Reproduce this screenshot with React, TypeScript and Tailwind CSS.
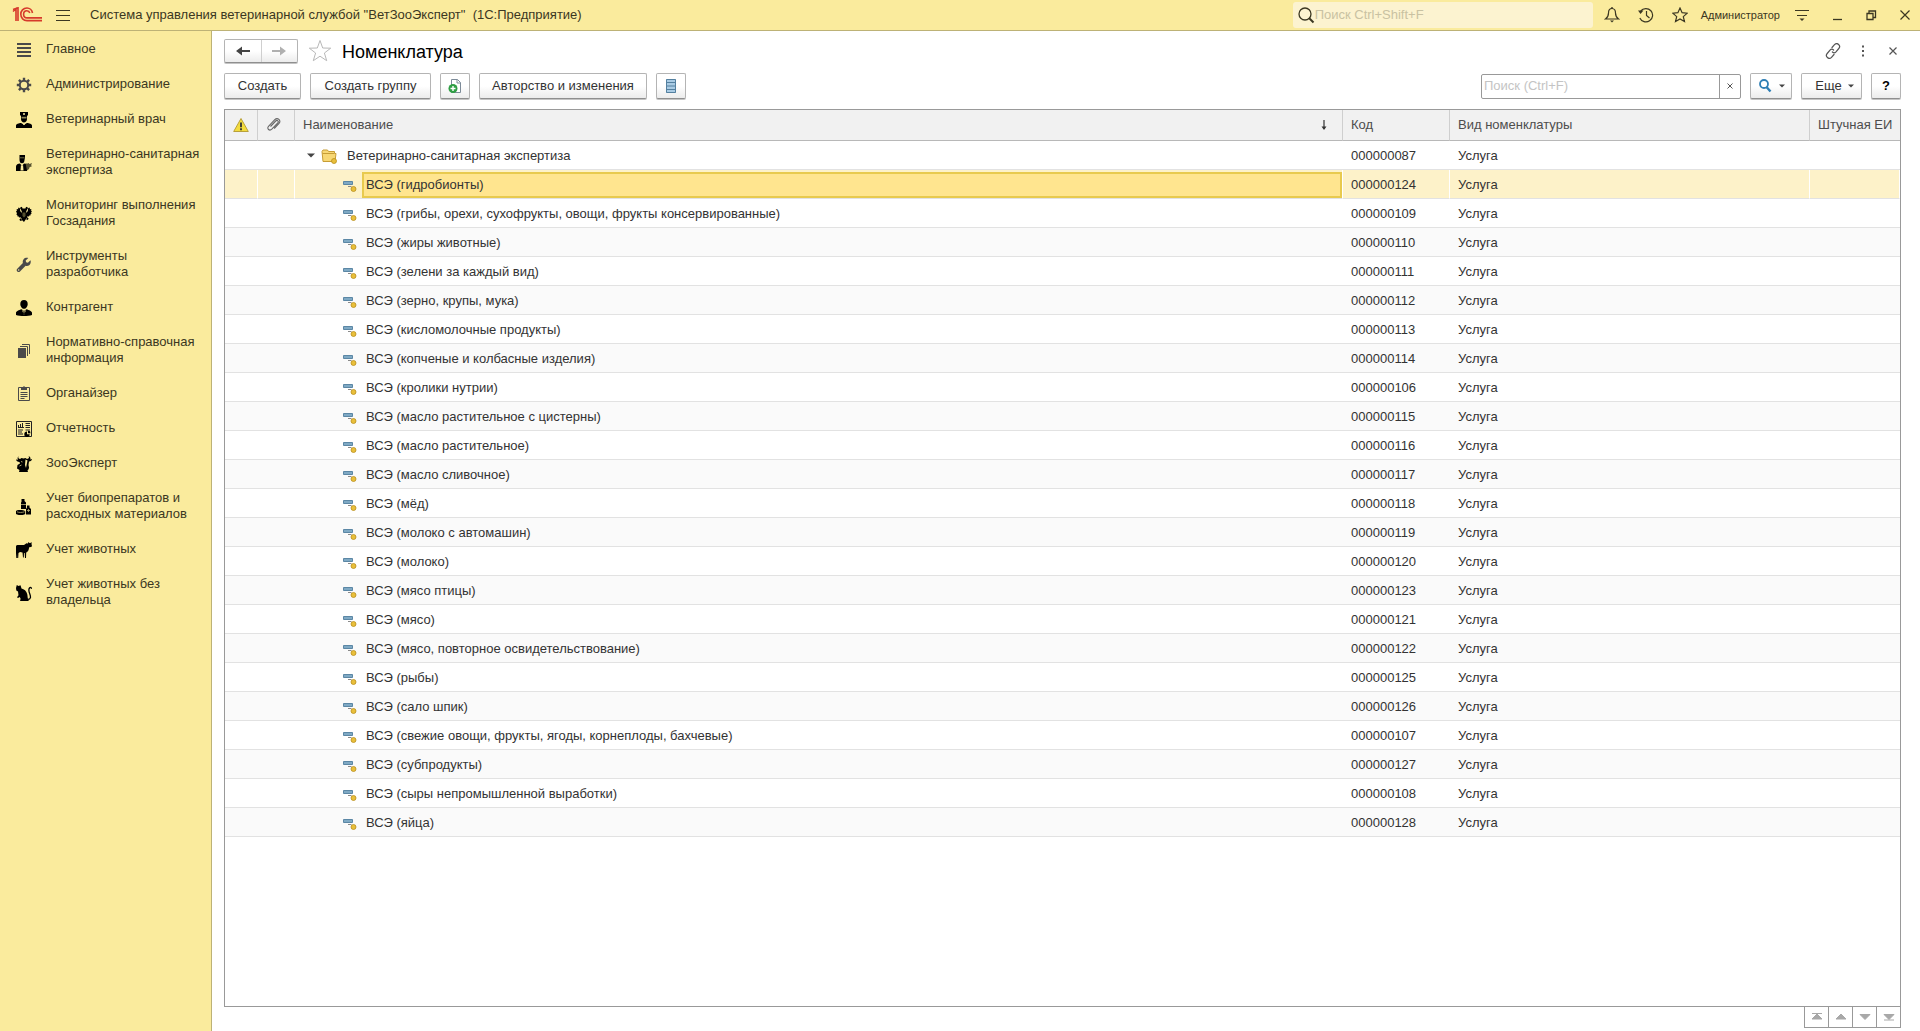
import type { ReactNode } from "react";

const ink = "#4a4a4a";

function Icon({ size = 16, children }: { size?: number; children: ReactNode }) {
  return (
    <svg width={size} height={size} viewBox={`0 0 ${size} ${size}`} className="shrink-0" aria-hidden="true">
      {children}
    </svg>
  );
}

const icons = {
  main: (
    <Icon>
      <path d="M1 2h14M1 6h14M1 10h14M1 14h14" stroke={ink} strokeWidth="2" />
    </Icon>
  ),
  gear: (
    <Icon>
      <circle cx="8" cy="8" r="4.200" fill="none" stroke={ink} strokeWidth="2" />
      <path
        d="M8 .8v3M8 12.200v3M.8 8h3M12.200 8h3M2.900 2.900l2.200 2.200M10.900 10.900l2.200 2.200M2.900 13.100l2.200-2.200M10.900 5.100l2.200-2.200"
        stroke={ink}
        strokeWidth="2.400"
      />
    </Icon>
  ),
  doctor: (
    <Icon>
      <path d="M4 0h8v3l-1 1v3c0 2-1.500 3.500-3 3.500S5 9 5 7V4L4 3z" />
      <path d="M5.500 4.800h5v1.700h-5z" fill="#8d8658" />
      <path d="M7.500 1h1v2h-1zM7 1.500h2v1H7z" fill="#faeb9d" />
      <path d="M0 16v-2.500C0 12 3 11 5 11l3 1.500L11 11c2 0 5 1 5 2.500V16z" />
      <path d="M6.500 11.500L8 13l1.500-1.500" stroke="#faeb9d" fill="none" strokeWidth=".8" />
    </Icon>
  ),
  vetExpert: (
    <Icon>
      <path d="M3.500 0h5.500v2.500L8.500 5c0 2-1 3.300-2.500 3.300S3.500 7 3.500 5z" />
      <path d="M4 2.800h4.500" stroke="#8d8658" strokeWidth=".8" />
      <path d="M0 16v-4.500C0 9.500 2 8.500 4 8.500L6 11l2-2.500c2 0 3 1 3 3V16z" />
      <path d="M5 9.500L6 11l1-1.500.5 6h-3z" fill="#faeb9d" />
      <path d="M9.500 8l1.500.8L12.500 8l1 1 2.500-1-.8 2 .5 1.500-2 .5-.7 2-2 1.500z" fill="#57522f" />
    </Icon>
  ),
  eagle: (
    <Icon>
      <path d="M8 2L9 3l1.200-2.200L12.500 2l-1.300 1-.3 2 .8 1 .3-3.500L14 1.500l-.3 1.700L15.500 3l-.7 1.500L16 5l-1 1.500.8.8-1.300 1 .3 1-1.500.3-.3 1-1.800-.3.3 1.500 1.300 1-1.500 1.200-1.500-.7L8 16l-1.800-1.700-1.500.7-1.500-1.200 1.300-1 .3-1.500-1.800.3-.3-1-1.500-.3.3-1-1.300-1 .8-.8L0 5l1.200-.5L.5 3l1.800.2L2 1.500l2 1L4.300 6l.8-1-.3-2-1.300-1L5.800.8 7 3z" />
      <path d="M6.500 6.500h3V10L8 11.500 6.500 10z" fill="#55502f" />
      <path d="M5.500 4.500v2M10.500 4.500v2M6 12.500l-1 .8M10 12.500l1 .8" stroke="#faeb9d" strokeWidth=".7" />
    </Icon>
  ),
  wrench: (
    <Icon>
      <path d="M14.500 3.200l-2.600 2.500-1.800-.4-.4-1.700L12.300 1C10.600.5 8.700.9 7.600 2.200 6.700 3.300 6.500 4.700 6.900 6L1.300 11.700a1.900 1.900 0 0 0 2.700 2.700L9.600 8.800c1.400.4 2.800.1 3.900-.9 1.200-1.200 1.600-3 1-4.700zM2.700 13.700a.7.7 0 1 1 0-1.400.7.700 0 0 1 0 1.400z" fill={ink} />
    </Icon>
  ),
  person: (
    <Icon>
      <path d="M8 0c2.300 0 3.700 1.600 3.700 4S10 8.800 8 8.800 4.300 6.400 4.300 4 5.700 0 8 0z" />
      <path d="M0 15v-2.200C0 11 3 10 5.500 9.200L8 11l2.500-1.800C13 10 16 11 16 12.800V15c-4 1.300-12 1.300-16 0z" />
      <path d="M6 10l2 5 2-5-1.200 1h-1.600z" fill="#faeb9d" />
      <path d="M7.500 11h1l.4 3-.9 1-.9-1z" />
    </Icon>
  ),
  docs: (
    <Icon>
      <path d="M2 5h8v10H2z" fill={ink} />
      <path d="M4 3.500h7.500V13M6 1.500h7.500V11" stroke={ink} fill="none" />
    </Icon>
  ),
  organizer: (
    <Icon>
      <path d="M2.500 1.500h11v13h-11z" stroke={ink} fill="none" />
      <path d="M5 1h2l1-1 1 1h2v3H5z" fill={ink} />
      <path d="M4.500 6.500h7M4.500 8.500h7M4.500 10.500h7M4.500 12.500h4" stroke={ink} />
    </Icon>
  ),
  report: (
    <Icon>
      <path d="M.5.500h15v15H.500z" stroke="#222" fill="none" />
      <path d="M2.500 6V4M4.500 6V3M6.500 6V2M2 6.500h6M9.500 2.500H14M9.500 4.500H14M9.500 6.500H14M2 9h5M2 11h4M2 13h5M9.500 9H14" stroke="#222" fill="none" />
      <path d="M11 10.500a2.700 2.700 0 1 0 2.700 2.700H11z" />
      <path d="M12 9.800a2.300 2.300 0 0 1 2.500 2.400H12z" />
    </Icon>
  ),
  cow: (
    <Icon>
      <path d="M3 0C1.800 1 2 2.500 4 3l1.500-1 2 .5L9.500 2l1.500 1c2-.3 2.500-1.500 1.500-3 2 .8 2.500 2.500 1.500 3.500L16 3c-.2 1.500-1.200 2.500-3 2.500L12.500 9l.5 2.500c0 1.500-1 2.500-1.500 3l.5 1.500H3l.5-2L1 12.500 1.500 9 4 7.500 3.500 6C1.500 6 .3 5 0 3.500l2 .3C1.200 2.300 1.500.8 3 0z" />
      <path d="M9.500 3.500l2 1-.8 4L10 12l-1-3z" fill="#faeb9d" />
      <path d="M5 5.500l1.500.5M3.500 10l2-1" stroke="#faeb9d" strokeWidth=".7" />
    </Icon>
  ),
  bottles: (
    <Icon>
      <path d="M5.500 0h3v2L10 3.500V10H5V3.500L5.500 3z" />
      <path d="M11 6.500h2.500v2L15 10v5.500h-5V10l1-1.500z" />
      <path d="M0 12c0-1.500 8-1.500 9.200 0v3C8 16.500 1.500 16.500 0 15z" />
      <path d="M1 12.800c2 .9 5 .9 7.500 0M5 5.500h5M11 11.500h3M12.500 10v3" stroke="#b9af75" strokeWidth=".8" fill="none" />
    </Icon>
  ),
  bull: (
    <Icon>
      <path d="M0 4.500C0 3.200 1 3 2.500 3L8 3l2.500-1.700L12 1.500 12.300 0l1.200 1 1.500-.2L15.800 0 15.500 2l.5 2.200-1 .8-1.800.3-.7 3-1.300 1.700-1 .5-.2 5.500H9l-.3-5-.7 0-.2 4.500H7L6.500 10.500 4 10l-1.500 1-.3 5H1.200L1 11 .7 16H0z" />
    </Icon>
  ),
  cat: (
    <Icon>
      <path d="M.8 0l1.700 1L4.500.2 5.500 3.500c2.500.5 5 2.500 5.700 5.500.5 2 .3 3.500.8 5l1 1.300L12 16H4.500l-.7-1 1-.7-1-2.300-1.800 1-1-.7 1.500-2L2 6.500.3 5.500 0 3z" />
      <path d="M11.500 14.300c3.800.2 3.200-3 2.300-5.300-.8-2-1.500-4.500-.3-6 .8-1 2.200-.5 1.800.8" stroke="#000" strokeWidth="1.300" fill="none" />
    </Icon>
  ),
};

const sections = [
  { title: "Главное", icon: icons.main },
  { title: "Администрирование", icon: icons.gear },
  { title: "Ветеринарный врач", icon: icons.doctor },
  { title: "Ветеринарно-санитарная экспертиза", icon: icons.vetExpert },
  { title: "Мониторинг выполнения Госзадания", icon: icons.eagle },
  { title: "Инструменты разработчика", icon: icons.wrench },
  { title: "Контрагент", icon: icons.person },
  { title: "Нормативно-справочная информация", icon: icons.docs },
  { title: "Органайзер", icon: icons.organizer },
  { title: "Отчетность", icon: icons.report },
  { title: "ЗооЭксперт", icon: icons.cow },
  { title: "Учет биопрепаратов и расходных материалов", icon: icons.bottles },
  { title: "Учет животных", icon: icons.bull },
  { title: "Учет животных без владельца", icon: icons.cat },
];

const items = [
  { name: "ВСЭ (гидробионты)", code: "000000124" },
  { name: "ВСЭ (грибы, орехи, сухофрукты, овощи, фрукты консервированные)", code: "000000109" },
  { name: "ВСЭ (жиры животные)", code: "000000110" },
  { name: "ВСЭ (зелени за каждый вид)", code: "000000111" },
  { name: "ВСЭ (зерно, крупы, мука)", code: "000000112" },
  { name: "ВСЭ (кисломолочные продукты)", code: "000000113" },
  { name: "ВСЭ (копченые и колбасные изделия)", code: "000000114" },
  { name: "ВСЭ (кролики нутрии)", code: "000000106" },
  { name: "ВСЭ (масло растительное с цистерны)", code: "000000115" },
  { name: "ВСЭ (масло растительное)", code: "000000116" },
  { name: "ВСЭ (масло сливочное)", code: "000000117" },
  { name: "ВСЭ (мёд)", code: "000000118" },
  { name: "ВСЭ (молоко с автомашин)", code: "000000119" },
  { name: "ВСЭ (молоко)", code: "000000120" },
  { name: "ВСЭ (мясо птицы)", code: "000000123" },
  { name: "ВСЭ (мясо)", code: "000000121" },
  { name: "ВСЭ (мясо, повторное освидетельствование)", code: "000000122" },
  { name: "ВСЭ (рыбы)", code: "000000125" },
  { name: "ВСЭ (сало шпик)", code: "000000126" },
  { name: "ВСЭ (свежие овощи, фрукты, ягоды, корнеплоды, бахчевые)", code: "000000107" },
  { name: "ВСЭ (субпродукты)", code: "000000127" },
  { name: "ВСЭ (сыры непромышленной выработки)", code: "000000108" },
  { name: "ВСЭ (яйца)", code: "000000128" },
];

const button =
  "flex h-[26px] items-center justify-center rounded-[2px] border border-[#b4b4b4] border-b-[#8f8f8f] bg-linear-to-b from-white from-50% to-[#ececec] shadow-[0_1px_0_#c4c4c4]";

const head = "h-[31px] border-r border-b border-r-[#cfcfcf] border-b-[#b8b8b8] bg-[#f1f1f1] font-normal";
const cell = "h-[29px] border-b border-[#e2e2e2] pt-px";
const selectedCell = "h-[29px] border-r border-b border-r-white border-b-[#e2e2e2] bg-[#fdf2c9] pt-px";

function TopBar() {
  return (
    <header className="flex h-[31px] shrink-0 items-center border-b border-[#bdb276] bg-[#faeb9d] text-[#3b3722]">
      <svg width="30" height="16" viewBox="0 0 30 16" className="ml-3 shrink-0" role="img" aria-label="1С">
        <g fill="none" stroke="#d63a2b" strokeWidth="1.600">
          <path d="M1 4.500L4 2v12" />
          <path d="M1 2.500L6 .8V14" />
          <path d="M20.500 6C20 3 17.500 1 15 1 11.200 1 8.800 4 8.800 7.300c0 3.700 2.700 6.300 6.200 6.300h15" />
          <path d="M17.800 6c-.4-1.300-1.500-2.200-2.900-2.200-2 0-3.300 1.600-3.300 3.500 0 2 1.400 3.600 3.400 3.600h15" />
        </g>
      </svg>
      <button aria-label="Меню" className="ml-[13px]">
        <Icon>
          <path d="M1 3.500h14M1 8.500h14M1 13.500h14" stroke="#3b3722" />
        </Icon>
      </button>
      <div className="ml-[19px] flex-1 truncate whitespace-pre">
        {'Система управления ветеринарной службой "ВетЗооЭксперт"  (1С:Предприятие)'}
      </div>
      <label className="flex h-[26px] w-[300px] items-center rounded-[3px] bg-[#fcf3d0] pl-1">
        <Icon size={18}>
          <circle cx="8" cy="8" r="6" fill="none" stroke="#3b3722" strokeWidth="1.300" />
          <path d="M12 12l4.500 4.500" stroke="#3b3722" strokeWidth="2" />
        </Icon>
        <input
          aria-label="Поиск"
          placeholder="Поиск Ctrl+Shift+F"
          className="w-full bg-transparent outline-none placeholder:text-[#c9c2a2]"
        />
      </label>
      <button aria-label="Уведомления" className="ml-[11px]">
        <Icon>
          <path d="M8 1.500c-2.500 0-3.500 2-3.500 4.500 0 3-1 4.500-3 6h13c-2-1.500-3-3-3-6 0-2.500-1-4.500-3.500-4.500z" fill="none" stroke="#3b3722" strokeWidth="1.200" />
          <path d="M6 13.500h4L8 15.500zM7.300 0h1.400v2H7.300z" fill="#3b3722" />
        </Icon>
      </button>
      <button aria-label="История" className="ml-[18px]">
        <Icon>
          <path d="M2.700 4A6.700 6.700 0 1 1 1.800 11M8.500 4v4.500l3 2.500" fill="none" stroke="#3b3722" strokeWidth="1.200" />
          <path d="M0 3.500h5.500L2.500 7z" fill="#3b3722" />
        </Icon>
      </button>
      <button aria-label="Избранное" className="ml-[18px]">
        <Icon>
          <path d="M8 1l2.100 4.700 5.100.5-3.900 3.400 1.200 5L8 12l-4.500 2.600 1.200-5L.8 6.200l5.100-.5z" fill="none" stroke="#3b3722" strokeWidth="1.200" />
        </Icon>
      </button>
      <button className="ml-[13px] text-[11px]">Администратор</button>
      <button aria-label="Настройки" className="ml-[14px]">
        <Icon>
          <path d="M1 3.500h14M3 8.500h10" stroke="#3b3722" strokeWidth="1.200" />
          <path d="M5.500 11.500h5L8 14z" fill="#3b3722" />
        </Icon>
      </button>
      <button aria-label="Свернуть" className="ml-[19px]">
        <Icon>
          <path d="M4 12.500h9" stroke="#3b3722" strokeWidth="1.300" />
        </Icon>
      </button>
      <button aria-label="Развернуть" className="ml-[18px]">
        <Icon>
          <path d="M4 6.500h6v6H4zM6 6V4h6.500v6.500H10" fill="none" stroke="#3b3722" strokeWidth="1.300" />
        </Icon>
      </button>
      <button aria-label="Закрыть" className="mr-[7px] ml-[18px]">
        <Icon>
          <path d="M3.500 3.500l9 9M12.500 3.500l-9 9" stroke="#3b3722" strokeWidth="1.200" />
        </Icon>
      </button>
    </header>
  );
}

function Sidebar() {
  return (
    <nav className="w-[212px] shrink-0 border-r border-[#bdb276] bg-[#faeb9d] pt-px text-[#3b3722]">
      {sections.map((section) => (
        <a key={section.title} href="#" className="flex items-center gap-[14px] pr-1 pl-4 leading-4">
          {section.icon}
          <span className="pt-[9px] pb-[10px]">{section.title}</span>
        </a>
      ))}
    </nav>
  );
}

function TitleRow() {
  return (
    <div className="flex h-6 items-center">
      <div className="flex h-6 w-[74px] rounded-[2px] border border-[#b4b4b4] border-b-[#8f8f8f] bg-linear-to-b from-white from-50% to-[#ececec] shadow-[0_1px_0_#c4c4c4]">
        <button aria-label="Назад" className="flex flex-1 items-center justify-center border-r border-[#cfcfcf]">
          <Icon>
            <path d="M1 8l6-4.500V7h8v2H7v3.500z" fill="#444" />
          </Icon>
        </button>
        <button aria-label="Вперед" className="flex flex-1 items-center justify-center">
          <Icon>
            <path d="M15 8L9 3.500V7H1v2h8v3.500z" fill="#b0b0b0" />
          </Icon>
        </button>
      </div>
      <button aria-label="В избранное" className="ml-[10px]">
        <Icon size={24}>
          <path d="M12 1.500l2.700 7.500 8 .200-6.300 4.800 2.300 7.700L12 17.200l-6.700 4.500L7.600 14 1.300 9.200l8-.200z" fill="none" stroke="#b8b8b8" />
        </Icon>
      </button>
      <h1 className="ml-[10px] flex-1 pt-px text-lg text-black">Номенклатура</h1>
      <button aria-label="Ссылка">
        <Icon>
          <g fill="none" stroke="#555" strokeWidth="1.200" strokeLinecap="round">
            <path d="M7 4.500l2.500-2.800a2.800 2.800 0 0 1 4.300 3.800L11 8.800a2.600 2.600 0 0 1-3.600.200" />
            <path d="M9 11.500l-2.500 2.800a2.800 2.800 0 0 1-4.300-3.800L5 7.200A2.600 2.600 0 0 1 8.600 7" />
          </g>
        </Icon>
      </button>
      <button aria-label="Действия" className="ml-[14px]">
        <Icon>
          <path d="M7 2.500h2v2H7zM7 7h2v2H7zM7 11.500h2v2H7z" fill="#555" />
        </Icon>
      </button>
      <button aria-label="Закрыть форму" className="ml-[14px]">
        <Icon>
          <path d="M4.500 4.500l7 7M11.500 4.500l-7 7" stroke="#555" strokeWidth="1.200" />
        </Icon>
      </button>
    </div>
  );
}

function Caret() {
  return (
    <svg width="6" height="4" viewBox="0 0 6 4" aria-hidden="true">
      <path d="M0 .500h6L3 3.500z" fill="#444" />
    </svg>
  );
}

function Toolbar() {
  return (
    <div className="mt-[10px] flex gap-[9px]">
      <button className={`${button} w-[77px]`}>Создать</button>
      <button className={`${button} w-[121px]`}>Создать группу</button>
      <button aria-label="Создать копированием" className={`${button} w-[30px]`}>
        <Icon>
          <path d="M4.500 1.500h6l3 3v10h-9z" fill="#fff" stroke="#7d8b99" />
          <path d="M10 1.500V5h3.500" fill="none" stroke="#7d8b99" />
          <circle cx="6" cy="10.500" r="4.500" fill="#2f9e44" />
          <path d="M6 8v5M3.500 10.500h5" stroke="#fff" strokeWidth="1.400" />
        </Icon>
      </button>
      <button className={`${button} w-[168px]`}>Авторство и изменения</button>
      <button aria-label="Список" className={`${button} w-[30px]`}>
        <Icon>
          <path d="M3 1h10v14H3z" fill="#a9cbe4" />
          <path d="M3.500 1.500h9v13h-9zM3 4.500h10M3 8h10M3 11.500h10" fill="none" stroke="#54809f" />
        </Icon>
      </button>
      <div className="ml-auto flex h-[25px] w-[260px] self-center rounded-[2px] border border-[#999] bg-white">
        <input
          aria-label="Поиск по списку"
          placeholder="Поиск (Ctrl+F)"
          className="min-w-0 flex-1 px-[2px] outline-none placeholder:text-[#c4c4c4]"
        />
        <button aria-label="Очистить" className="flex w-[21px] items-center justify-center border-l border-[#999]">
          <svg width="6" height="6" viewBox="0 0 6 6" aria-hidden="true">
            <path d="M.5.500l5 5M5.500.500l-5 5" stroke="#555" />
          </svg>
        </button>
      </div>
      <button aria-label="Найти" className={`${button} w-[42px] gap-[6px]`}>
        <Icon>
          <circle cx="7" cy="6" r="4" fill="#fff" stroke="#2f7fb5" strokeWidth="1.800" />
          <path d="M9.500 9l4 4.500" stroke="#2f7fb5" strokeWidth="2.400" />
        </Icon>
        <Caret />
      </button>
      <button className={`${button} w-[61px] gap-[6px] pl-[6px]`}>
        Еще
        <Caret />
      </button>
      <button aria-label="Справка" className={`${button} w-[30px] font-bold text-black`}>
        ?
      </button>
    </div>
  );
}

function ItemIcon() {
  return (
    <Icon>
      <path d="M.5 4.500h9v3h-9z" fill="#7fa9c4" stroke="#5b87a5" />
      <path d="M5 9.500h3.500" stroke="#8a8a8a" />
      <circle cx="10.500" cy="12" r="2.500" fill="#e9bf3a" stroke="#b98f1f" strokeWidth=".8" />
    </Icon>
  );
}

function NomenclatureTable() {
  return (
    <table className="w-full table-fixed border-separate border-spacing-0 text-left">
      <colgroup>
        <col className="w-[33px]" />
        <col className="w-[37px]" />
        <col />
        <col className="w-[107px]" />
        <col className="w-[360px]" />
        <col className="w-[90px]" />
      </colgroup>
      <thead className="text-[#4d4d4d]">
        <tr>
          <th className={head} aria-label="Предупреждение">
            <div className="flex justify-center">
              <Icon>
                <path d="M8 1.500L15.300 14.500H.700z" fill="#f3dc3e" stroke="#b9a13a" strokeLinejoin="round" />
                <path d="M8 5.500v4.700M8 11.300v1.900" stroke="#333" strokeWidth="1.800" />
              </Icon>
            </div>
          </th>
          <th className={head} aria-label="Файлы">
            <div className="flex justify-center pr-1">
              <Icon>
                <path
                  d="M4.500 9.500L9.700 4c1.500-1.500 3.500.300 2.100 1.900l-6 6.300c-2.300 2.300-5.400-.600-3.300-2.900L8.800 2.700c2.700-2.700 6.900.700 4.200 3.700L8.200 11.500"
                  fill="none"
                  stroke="#666"
                  strokeWidth="1.100"
                />
              </Icon>
            </div>
          </th>
          <th className={head}>
            <div className="flex items-center justify-between pr-[10px] pl-2">
              Наименование
              <Icon>
                <path d="M8 3v9" stroke="#333" strokeWidth="1.200" />
                <path d="M5.500 9.500h5L8 13z" fill="#333" />
              </Icon>
            </div>
          </th>
          <th className={`${head} pl-2`}>Код</th>
          <th className={`${head} pl-2`}>Вид номенклатуры</th>
          <th className="h-[31px] border-b border-[#b8b8b8] bg-[#f1f1f1] pl-2 font-normal whitespace-nowrap">Штучная ЕИ</th>
        </tr>
      </thead>
      <tbody>
        <tr>
          <td className={cell} />
          <td className={cell} />
          <td className={cell}>
            <div className="flex items-center pl-3">
              <svg width="8" height="5" viewBox="0 0 8 5" aria-hidden="true">
                <path d="M0 .500h8L4 4.500z" fill="#444" />
              </svg>
              <span className="ml-[6px] flex">
                <Icon>
                  <path d="M1 3.500l1-1.500h4.500l1 1.500h6v2H15l-1 8H2z" fill="#f7d774" stroke="#c79d35" strokeLinejoin="round" />
                  <path d="M1.500 5.500H13" stroke="#c79d35" />
                  <circle cx="13" cy="13" r="2.500" fill="#e9bf3a" stroke="#b98f1f" strokeWidth=".8" />
                </Icon>
              </span>
              <span className="ml-[10px]">Ветеринарно-санитарная экспертиза</span>
            </div>
          </td>
          <td className={`${cell} pl-2`}>000000087</td>
          <td className={`${cell} pl-2`}>Услуга</td>
          <td className={cell} />
        </tr>
        {items.map((item, i) => {
          const selected = i === 0;
          const td = selected ? selectedCell : cell;
          return (
            <tr key={item.code} className={i % 2 === 0 ? "bg-[#fafafa]" : "bg-white"}>
              <td className={td} />
              <td className={td} />
              <td className={td}>
                <div className="flex items-center pl-12">
                  <ItemIcon />
                  <span
                    className={
                      selected
                        ? "ml-[3px] flex h-[26px] flex-1 items-center border-2 border-[#e8ca4e] bg-[#ffe58f] pl-[2px]"
                        : "ml-[3px] pl-1"
                    }
                  >
                    {item.name}
                  </span>
                </div>
              </td>
              <td className={`${td} pl-2`}>{item.code}</td>
              <td className={`${td} pl-2`}>Услуга</td>
              <td className={td} />
            </tr>
          );
        })}
      </tbody>
    </table>
  );
}

const pager = [
  { label: "В начало", d: "M3 4.500h10M8 5l5 5H3z" },
  { label: "Вверх", d: "M8 5l5 5H3z" },
  { label: "Вниз", d: "M3 5.500h10l-5 5z" },
  { label: "В конец", d: "M3 5.500h10l-5 5zM3 11h10" },
];

export default function App() {
  return (
    <div className="flex h-screen flex-col bg-white font-['Liberation_Sans',Arial,sans-serif] text-[13px] text-[#333]">
      <TopBar />
      <div className="flex min-h-0 flex-1">
        <Sidebar />
        <main className="flex min-w-0 flex-1 flex-col pt-2 pr-[19px] pb-[3px] pl-3">
          <TitleRow />
          <Toolbar />
          <div className="mt-[10px] min-h-0 flex-1 overflow-hidden border border-[#999]">
            <NomenclatureTable />
          </div>
          <div className="flex self-end border-l border-[#999]">
            {pager.map((p) => (
              <button
                key={p.label}
                aria-label={p.label}
                className="flex h-[21px] w-6 items-center justify-center border-r border-b border-[#999]"
              >
                <Icon>
                  <path d={p.d} fill="#a8a8a8" stroke="#a8a8a8" />
                </Icon>
              </button>
            ))}
          </div>
        </main>
      </div>
    </div>
  );
}
